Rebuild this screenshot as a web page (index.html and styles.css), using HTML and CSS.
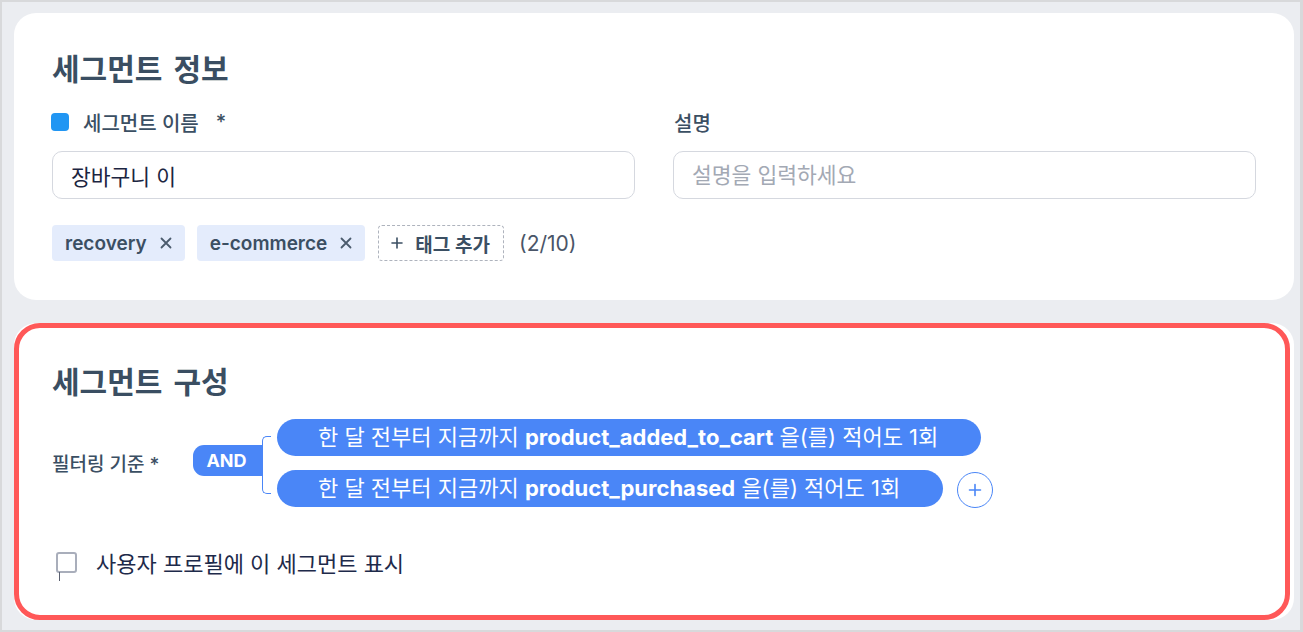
FILE: index.html
```html
<!DOCTYPE html>
<html lang="ko">
<head>
<meta charset="utf-8">
<title>세그먼트</title>
<link rel="stylesheet" href="styles.css">
</head>
<body>
<div class="frame">
  <section class="card card-info">
    <h2 class="card-title">세그먼트 정보</h2>
    <div class="fields">
      <div class="field">
        <div class="label"><span class="dot"></span><span>세그먼트 이름</span><span class="req">*</span></div>
        <input class="input" type="text" value="장바구니 이">
      </div>
      <div class="field">
        <div class="label"><span>설명</span></div>
        <input class="input" type="text" placeholder="설명을 입력하세요">
      </div>
    </div>
    <div class="tags">
      <span class="tag">recovery<svg class="x" viewBox="0 0 12 12" width="12" height="12"><path d="M1.5 1.5L10.5 10.5M10.5 1.5L1.5 10.5" stroke="#4b5b6d" stroke-width="1.8" stroke-linecap="round"/></svg></span>
      <span class="tag">e-commerce<svg class="x" viewBox="0 0 12 12" width="12" height="12"><path d="M1.5 1.5L10.5 10.5M10.5 1.5L1.5 10.5" stroke="#4b5b6d" stroke-width="1.8" stroke-linecap="round"/></svg></span>
      <span class="tag-add"><svg viewBox="0 0 12 12" width="12" height="12"><path d="M6 1V11M1 6H11" stroke="#3b4f63" stroke-width="1.6" stroke-linecap="round"/></svg>태그 추가</span>
      <span class="count">(2/10)</span>
    </div>
  </section>

  <section class="card card-compose">
    <div class="highlight"></div>
    <h2 class="card-title">세그먼트 구성</h2>
    <div class="filter-row">
      <div class="filter-label">필터링 기준 *</div>
      <div class="and">AND</div>
      <div class="bracket"></div>
      <div class="conditions">
        <div class="cond-line">
          <div class="cond">한 달 전부터 지금까지 <b>product_added_to_cart</b> 을(를) 적어도 1회</div>
        </div>
        <div class="cond-line">
          <div class="cond">한 달 전부터 지금까지 <b>product_purchased</b> 을(를) 적어도 1회</div>
          <button class="plus" type="button"><svg viewBox="0 0 14 14" width="14" height="14"><path d="M7 1.5V12.5M1.5 7H12.5" stroke="#4a86f7" stroke-width="1.6" stroke-linecap="round"/></svg></button>
        </div>
      </div>
    </div>
    <label class="check-row"><span class="checkbox"></span><span>사용자 프로필에 이 세그먼트 표시</span></label>
  </section>
</div>
</body>
</html>
```

FILE: styles.css
```css
* { box-sizing: border-box; }
html, body { margin: 0; padding: 0; }
body {
  font-family: Inter, "Noto Sans CJK KR", sans-serif;
  background: #ebedf1;
}
.frame {
  width: 1303px;
  height: 632px;
  border-top: 2px solid #d8d9db;
  border-left: 2px solid #d8d9db;
  border-right: 3px solid #d8d9db;
  border-bottom: 2px solid #d8d9db;
  background: #ebedf1;
  padding: 11px 6px 0 12px;
  display: flex;
  flex-direction: column;
  gap: 23px;
}
.card {
  width: 1280px;
  background: #fff;
  border-radius: 22px;
  padding: 38px 38px 39px 38px;
  position: relative;
}
.card-compose {
  padding-top: 41px;
  height: 297px;
}
.highlight {
  position: absolute;
  left: 0; top: 0; bottom: 0; right: 4px;
  border: 5px solid #ff5858;
  border-radius: 26px;
  pointer-events: none;
}
.card-title {
  margin: 0;
  font-size: 30px;
  line-height: 36px;
  font-weight: 700;
  color: #3a4e62;
  word-spacing: 4px;
}
.fields {
  margin-top: 22px;
  display: grid;
  grid-template-columns: 583px 583px;
  column-gap: 38px;
}
.field { display: flex; flex-direction: column; gap: 16px; }
.label {
  display: flex;
  align-items: center;
  height: 26px;
  font-size: 20px;
  font-weight: 500;
  color: #3b4f63;
}
.dot {
  width: 18px; height: 18px;
  border-radius: 4px;
  background: #2196f3;
  margin: 0 14px 0 -1px;
}
.req { margin-left: 17px; }
.field:nth-child(2) .label { padding-left: 1px; }
.input {
  height: 48px;
  width: 100%;
  border: 1px solid #d5d8df;
  border-radius: 10px;
  padding: 0 18px;
  font-family: Inter, "Noto Sans CJK KR", sans-serif;
  font-size: 21.5px;
  color: #1c2541;
  background: #fff;
  outline: none;
}
.input::placeholder { color: #a3a9b4; }
.tags {
  margin-top: 26px;
  display: flex;
  align-items: center;
  height: 36px;
}
.tag {
  height: 36px;
  display: inline-flex;
  align-items: center;
  gap: 13px;
  padding: 0 13px;
  background: #e4ecfc;
  border-radius: 4px;
  font-size: 19px;
  font-weight: 600;
  color: #3b4f63;
  margin-right: 12px;
}
.tag-add {
  height: 36px;
  display: inline-flex;
  align-items: center;
  gap: 12px;
  padding: 0 13px 0 12px;
  border: 1px dashed #aeb3bd;
  border-radius: 4px;
  font-size: 19px;
  font-weight: 600;
  color: #3b4f63;
  margin-left: 1px;
}
.count {
  margin-left: 15px;
  font-size: 21px;
  color: #4a5568;
}
.filter-row {
  margin-top: 19px;
  display: flex;
  align-items: center;
}
.filter-label {
  width: 141px;
  font-size: 19px;
  font-weight: 500;
  color: #3b4f63;
  white-space: nowrap;
  margin-top: -3px;
}
.and {
  width: 69px;
  height: 31px;
  background: #4a86f7;
  border-radius: 11px 0 0 11px;
  color: #fff;
  font-weight: 700;
  font-size: 18px;
  display: flex;
  align-items: center;
  justify-content: center;
  padding-right: 2px;
  margin-top: -6px;
}
.bracket {
  width: 9px;
  height: 58px;
  border: 1px solid #4a86f7;
  border-right: none;
  border-radius: 5px 0 0 5px;
  margin-top: 2px;
}
.conditions {
  margin-left: 6px;
  display: flex;
  flex-direction: column;
  gap: 13px;
}
.cond-line { display: flex; align-items: center; gap: 14px; }
.cond {
  height: 37px;
  border-radius: 19px;
  background: #4a86f7;
  color: #fff;
  font-size: 22px;
  line-height: 37px;
  padding: 0 43px 0 41px;
  white-space: nowrap;
}
.cond b { font-weight: 700; }
.plus {
  width: 36px; height: 36px;
  border-radius: 50%;
  border: 1px solid #4a86f7;
  background: #fff;
  display: flex;
  align-items: center;
  justify-content: center;
  padding: 0;
  margin-top: 3px;
}
.check-row {
  margin-top: 40px;
  display: flex;
  align-items: center;
  height: 28px;
  font-size: 22px;
  color: #1e2a4a;
}
.checkbox {
  width: 21px; height: 21px;
  border: 2px solid #a9aebb;
  border-radius: 3px;
  margin: 0 19px 0 4px;
  position: relative;
}
.checkbox::after {
  content: "";
  position: absolute;
  left: 1px; top: 18px;
  width: 1px; height: 9px;
  background: #5a6070;
}
```
